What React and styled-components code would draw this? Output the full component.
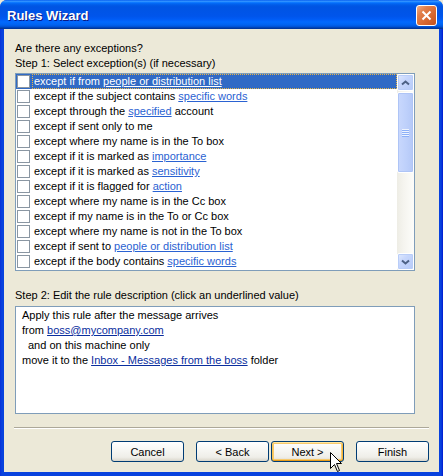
import React from "react";
import styled, { createGlobalStyle } from "styled-components";

const Global = createGlobalStyle`
  html, body { margin: 0; padding: 0; background: #ECE9D8; }
  body { font-family: "Liberation Sans", Arial, sans-serif; font-size: 11px; }
`;

const Window = styled.div`
  position: relative;
  width: 443px;
  height: 476px;
  display: flex;
  flex-direction: column;
  background: #0842DE;
  border-radius: 7px 7px 0 0;
  overflow: hidden;
  box-sizing: border-box;
`;

const TitleBar = styled.div`
  height: 29px;
  flex: none;
  display: flex;
  align-items: center;
  justify-content: space-between;
  padding: 0 6px 0 7px;
  box-sizing: border-box;
  background: linear-gradient(
    to bottom,
    #0058ee 0%, #3593ff 4%, #288eff 6%, #127dff 8%, #036ffc 10%,
    #0262ee 14%, #0057e5 20%, #0054e3 24%, #0055eb 56%, #005bf5 66%,
    #026afe 76%, #0062ef 86%, #0052d6 92%, #0040ab 96%, #003092 100%
  );
`;

const Title = styled.span`
  font-family: "Liberation Sans", Arial, sans-serif;
  font-weight: bold;
  font-size: 13px;
  color: #fff;
  text-shadow: 1px 1px 0 #0a1883;
  margin-top: 1px;
`;

const CloseButton = styled.div`
  width: 21px;
  height: 21px;
  box-sizing: border-box;
  border: 1px solid #fff;
  border-radius: 3px;
  display: flex;
  align-items: center;
  justify-content: center;
  margin-top: 1px;
  background: linear-gradient(135deg, #f3ac84 0%, #e2804c 28%, #d6662f 65%, #c4521f 100%);
`;

const Frame = styled.div`
  flex: 1;
  display: flex;
  padding: 0 4px 4px 4px;
  background: linear-gradient(to right, #0831d9 0, #0842de 2px, #0842de calc(100% - 2px), #0019cf 100%);
`;

const Client = styled.div`
  flex: 1;
  background: #ece9d8;
  padding: 12px 10px 10px 11px;
  display: flex;
  flex-direction: column;
  color: #000;
`;

const Label = styled.div`
  line-height: 15px;
  height: 15px;
  white-space: nowrap;
  margin-top: ${(p) => p.$mt || 0}px;
`;

const ListBox = styled.div`
  margin-top: 2px;
  width: 400px;
  height: 198px;
  box-sizing: border-box;
  border: 1px solid #7f9db9;
  background: #fff;
  display: flex;
`;

const Rows = styled.div`
  flex: 1;
  display: flex;
  flex-direction: column;
  overflow: hidden;
`;

const Row = styled.div`
  height: 15px;
  flex: none;
  display: flex;
  align-items: center;
  background: ${(p) => (p.$selected ? "#316ac5" : "transparent")};
  color: ${(p) => (p.$selected ? "#fff" : "#000")};
`;

const Check = styled.span`
  width: 13px;
  height: 13px;
  box-sizing: border-box;
  border: 1px solid #8a96a2;
  background: #fff;
  margin-left: 1px;
  flex: none;
`;

const RowText = styled.span`
  flex: 1;
  height: 15px;
  line-height: 13px;
  box-sizing: border-box;
  margin-left: 2px;
  padding-left: 1px;
  white-space: nowrap;
  border: 1px dotted ${(p) => (p.$focus ? "#e9b64a" : "transparent")};
`;

const ListLink = styled.span`
  color: ${(p) => (p.$selected ? "#fff" : "#2a62d2")};
  text-decoration: underline;
`;

const ScrollBar = styled.div`
  width: 17px;
  flex: none;
  display: flex;
  flex-direction: column;
  background: linear-gradient(to right, #eeede5 0%, #f5f4ef 40%, #fdfdfa 100%);
`;

const ScrollButton = styled.div`
  height: 17px;
  flex: none;
  box-sizing: border-box;
  border: 1px solid #fff;
  border-radius: 2px;
  box-shadow: inset 0 0 0 1px #b9cdf8;
  background: linear-gradient(135deg, #e0e9fe 0%, #c6d6fc 40%, #b6caf8 100%);
  display: flex;
  align-items: center;
  justify-content: center;
`;

const Thumb = styled.div`
  height: 81px;
  margin-top: 1px;
  flex: none;
  box-sizing: border-box;
  border: 1px solid #fff;
  border-radius: 2px;
  box-shadow: inset 0 0 0 1px #aec4f6;
  background: linear-gradient(to right, #c9d8fd 0%, #bfd1fb 50%, #b4c8f7 100%);
  display: flex;
  align-items: center;
  justify-content: center;
`;

const Grip = styled.div`
  width: 7px;
  height: 8px;
  background: repeating-linear-gradient(to bottom, #eef4fe 0, #eef4fe 1px, #8cb0f8 1px, #8cb0f8 2px);
`;

const Spacer = styled.div`
  flex: 1;
`;

const DescBox = styled.div`
  margin-top: 3px;
  width: 400px;
  height: 108px;
  box-sizing: border-box;
  border: 1px solid #7f9db9;
  background: #fff;
  padding: 1px 0 0 6px;
`;

const DescLine = styled.div`
  line-height: 15px;
  height: 15px;
  white-space: nowrap;
  padding-left: ${(p) => p.$indent || 0}px;
`;

const DescLink = styled.span`
  color: #0a2e9e;
  text-decoration: underline;
`;

const Separator = styled.div`
  margin: 13px 0 0 -1px;
  height: 0;
  border-top: 1px solid #aca899;
  border-bottom: 1px solid #fff;
`;

const ButtonRow = styled.div`
  margin-top: 12px;
  display: flex;
  justify-content: flex-end;
`;

const Button = styled.div`
  width: 73px;
  height: 21px;
  box-sizing: border-box;
  margin-left: ${(p) => p.$ml}px;
  border: 1px solid #003c74;
  border-radius: 3px;
  background: linear-gradient(to bottom, #ffffff 0%, #f7f7f4 40%, #efeee8 80%, #d9d6cb 100%);
  box-shadow: ${(p) =>
    p.$default
      ? "inset 0 1px 0 #ffe7a2, inset 0 -1px 0 #e59b1a, inset 1px 0 0 #f8c65a, inset -1px 0 0 #f2b23a, inset 0 0 0 2px #f8ca6c"
      : "none"};
  display: flex;
  align-items: center;
  justify-content: center;
  color: #000;
`;

const Cursor = styled.svg`
  position: absolute;
  left: 330px;
  top: 452px;
  pointer-events: none;
`;

const rows = [
  ["except if from ", "people or distribution list", ""],
  ["except if the subject contains ", "specific words", ""],
  ["except through the ", "specified", " account"],
  ["except if sent only to me"],
  ["except where my name is in the To box"],
  ["except if it is marked as ", "importance", ""],
  ["except if it is marked as ", "sensitivity", ""],
  ["except if it is flagged for ", "action", ""],
  ["except where my name is in the Cc box"],
  ["except if my name is in the To or Cc box"],
  ["except where my name is not in the To box"],
  ["except if sent to ", "people or distribution list", ""],
  ["except if the body contains ", "specific words", ""],
];

const Chevron = ({ down }) => (
  <svg width="9" height="6" viewBox="0 0 9 6">
    <path
      d={down ? "M1 1.5 L4.5 4.5 L8 1.5" : "M1 4.5 L4.5 1.5 L8 4.5"}
      fill="none"
      stroke="#4d6185"
      strokeWidth="2"
    />
  </svg>
);

export default function App() {
  return (
    <>
      <Global />
      <Window>
        <TitleBar>
          <Title>Rules Wizard</Title>
          <CloseButton>
            <svg width="11" height="11" viewBox="0 0 11 11">
              <path d="M1.5 1.5 L9.5 9.5 M9.5 1.5 L1.5 9.5" stroke="#fff" strokeWidth="2" />
            </svg>
          </CloseButton>
        </TitleBar>
        <Frame>
          <Client>
            <Label>Are there any exceptions?</Label>
            <Label>Step 1: Select exception(s) (if necessary)</Label>
            <ListBox>
              <Rows>
                {rows.map((r, i) => {
                  const sel = i === 0;
                  return (
                    <Row key={i} $selected={sel}>
                      <Check />
                      <RowText $focus={sel}>
                        {r[0]}
                        {r[1] && <ListLink $selected={sel}>{r[1]}</ListLink>}
                        {r[2]}
                      </RowText>
                    </Row>
                  );
                })}
              </Rows>
              <ScrollBar>
                <ScrollButton>
                  <Chevron />
                </ScrollButton>
                <Thumb>
                  <Grip />
                </Thumb>
                <Spacer />
                <ScrollButton>
                  <Chevron down />
                </ScrollButton>
              </ScrollBar>
            </ListBox>
            <Label $mt={17}>Step 2: Edit the rule description (click an underlined value)</Label>
            <DescBox>
              <DescLine>Apply this rule after the message arrives</DescLine>
              <DescLine>
                from <DescLink>boss@mycompany.com</DescLink>
              </DescLine>
              <DescLine $indent={6}>and on this machine only</DescLine>
              <DescLine>
                move it to the <DescLink>Inbox - Messages from the boss</DescLink> folder
              </DescLine>
            </DescBox>
            <Separator />
            <ButtonRow>
              <Button $ml={0}>Cancel</Button>
              <Button $ml={12}>&lt; Back</Button>
              <Button $ml={2} $default>Next &gt;</Button>
              <Button $ml={12}>Finish</Button>
            </ButtonRow>
          </Client>
        </Frame>
        <Cursor width="13" height="21" viewBox="0 0 13 21">
          <path
            d="M0.5 0.5 L0.5 16.5 L4.5 12.5 L7.5 19.5 L9.5 18.5 L6.5 11.5 L11.5 11.5 Z"
            fill="#fff"
            stroke="#000"
            strokeWidth="1"
            strokeLinejoin="miter"
          />
        </Cursor>
      </Window>
    </>
  );
}
